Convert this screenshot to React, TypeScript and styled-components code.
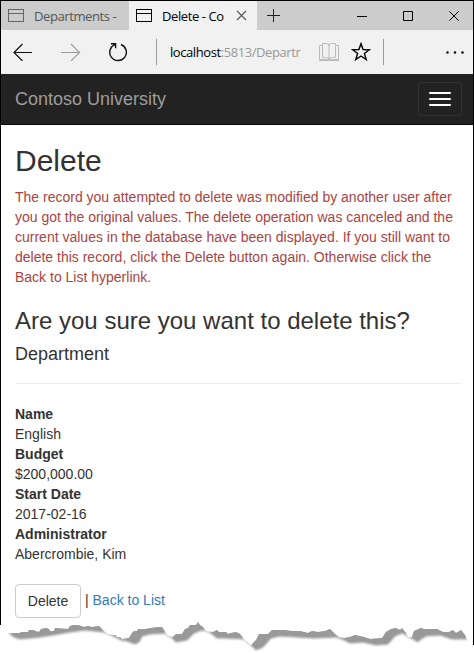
import React from "react";
import styled, { createGlobalStyle } from "styled-components";

const Global = createGlobalStyle`
  * { box-sizing: border-box; }
  body { margin: 0; background: #fff; }
`;

const Screen = styled.div`
  position: relative;
  width: 474px;
  height: 653px;
  overflow: hidden;
  background: #fff;
  color: #333;
  font: 14px/20px "Liberation Sans", Arial, sans-serif;
`;

const Window = styled.div`
  height: 645px;
  border-top: 1px solid #000;
  border-right: 1px solid #000;
  display: flex;
`;

const LeftEdge = styled.div`
  flex: none;
  width: 1px;
  height: 624px;
  background: #000;
`;

const Frame = styled.div`
  flex: 1;
  min-width: 0;
`;

const TabStrip = styled.div`
  display: flex;
  height: 29px;
  background: #ccc;
  font-family: "Open Sans", sans-serif;
`;

const Tab = styled.div<{ $active?: boolean }>`
  display: flex;
  align-items: center;
  width: 128px;
  padding-left: 7px;
  background: ${(p) => (p.$active ? "#f1f1f1" : "#ccc")};
  color: ${(p) => (p.$active ? "#000" : "#555")};
`;

const TabTitle = styled.span<{ $width: number }>`
  width: ${(p) => p.$width}px;
  margin-left: 9px;
  white-space: nowrap;
  font-size: 13px;
  line-height: 28px;
  letter-spacing: -0.4px;
`;

const WindowControls = styled.div`
  display: flex;
  flex: 1;
  align-items: center;
  justify-content: space-between;
  padding: 0 14px 0 8px;
`;

const ControlGroup = styled.div`
  display: flex;
  gap: 36px;
`;

const Toolbar = styled.div`
  display: flex;
  align-items: center;
  height: 44px;
  padding: 0 9px 0 12px;
  background: #f1f1f1;
`;

const NavIcons = styled.div`
  display: flex;
  align-items: center;
  gap: 28px;
`;

const Divider = styled.div<{ $before: number; $after: number }>`
  width: 1px;
  height: 26px;
  margin: 0 ${(p) => p.$after}px 0 ${(p) => p.$before}px;
  background: #999;
`;

const Address = styled.div`
  width: 134px;
  white-space: nowrap;
  font-family: "Open Sans", sans-serif;
  font-size: 13px;
  letter-spacing: -0.42px;
  color: #999;
  b { font-weight: 400; color: #000; }
`;

const PageActions = styled.div`
  display: flex;
  align-items: center;
  gap: 12px;
  margin-left: 15px;
`;

const More = styled.div`
  margin-left: auto;
  display: flex;
`;

const Navbar = styled.nav`
  display: flex;
  align-items: center;
  justify-content: space-between;
  height: 51px;
  padding: 0 11px 0 14px;
  background: #222;
  border-bottom: 1px solid #080808;
`;

const Brand = styled.span`
  color: #9d9d9d;
  font-size: 18px;
  line-height: 20px;
`;

const MenuButton = styled.button`
  display: flex;
  flex-direction: column;
  align-items: center;
  justify-content: center;
  gap: 4px;
  width: 44px;
  height: 34px;
  padding: 0;
  background: transparent;
  border: 1px solid #333;
  border-radius: 4px;
`;

const MenuBar = styled.span`
  width: 22px;
  height: 2px;
  border-radius: 1px;
  background: #fff;
`;

const Content = styled.main`
  padding: 19px 11px 0 14px;
`;

const Title = styled.h2`
  margin: 0 0 10px;
  font-size: 30px;
  font-weight: 400;
  line-height: 33px;
`;

const ErrorText = styled.p`
  margin: 0 0 20px;
  color: #a94442;
  white-space: nowrap;
`;

const Question = styled.h3`
  margin: 0 0 10px;
  font-size: 24px;
  font-weight: 400;
  line-height: 27px;
`;

const Entity = styled.h4`
  margin: 0;
  padding-bottom: 19px;
  border-bottom: 1px solid #eee;
  font-size: 18px;
  font-weight: 400;
  line-height: 20px;
`;

const Details = styled.dl`
  margin: 20px 0;
  dt { font-weight: 700; }
  dd { margin: 0; }
`;

const Actions = styled.div`
  display: flex;
  align-items: center;
  gap: 4px;
  height: 34px;
`;

const DeleteButton = styled.button`
  width: 66px;
  height: 34px;
  padding: 0;
  border: 1px solid #ccc;
  border-radius: 4px;
  background: #fff;
  color: #333;
  font: inherit;
`;

const Links = styled.span`
  line-height: 20px;
  margin-bottom: 2px;
  a { color: #337ab7; text-decoration: none; }
`;

const Torn = styled.svg`
  position: absolute;
  left: 0;
  top: 618px;
`;

const TabIcon = ({ color }: { color: string }) => (
  <svg width="17" height="14" viewBox="0 0 17 14" fill="none" stroke={color} shapeRendering="crispEdges">
    <path d="M.5.5h15v12H.5zM.5 4.5h15" />
  </svg>
);

const Cross = ({ color, size }: { color: string; size: number }) => (
  <svg width={size} height={size} viewBox="0 0 10 10" fill="none" stroke={color}>
    <path d="M.3.3l9.4 9.4M9.7.3L.3 9.7" />
  </svg>
);

const tornTop =
  "M9 633L20 633 21 632 28 632 29 630 34 630 35 631 39 632 41 629 46 628 49 629 50 631 54 631 55 628 68 629 70 626 73 625 78 625 84 627 88 626 92 627 99 626 104 631 108 634 114 635 116 635 117 637 120 637 122 639 129 638 132 633 134 631 137 631 138 629 145 629 151 628 158 627 162 627 164 630 167 635 173 637 176 634 182 634 185 629 188 628 190 625 196 625 198 622 200 625 203 627 206 631 213 632 217 630 219 632 226 632 228 634 231 633 236 632 240 634 244 639 251 645 256 640 259 634 268 634 272 630 284 630 292 631 300 631 308 633 312 631 318 632 325 631 330 629 335 634 339 637 344 638 350 637 355 635 364 637 370 639 382 638 386 632 391 629 396 628 400 630 402 628 406 633 408 637 412 637 414 631 421 628 424 629 437 629 443 632 449 632 453 630 456 633 461 630 465 635 467 639 ";

const tornShadow =
  tornTop +
  "452 639 440 635 426 636 421 639 418 642 413 639 408 636 402 633 395 636 388 644 376 645 363 642 350 643 342 639 336 637 314 638 280 636 271 638 263 647 256 650 251 645 244 639 225 638 217 638 208 631 202 630 194 633 187 640 176 642 172 638 166 633 150 634 142 636 139 642 135 644 127 641 121 640 111 635 104 632 85 630 70 632 53 635 40 637 20 639 14 637Z";

const details: [string, string][] = [
  ["Name", "English"],
  ["Budget", "$200,000.00"],
  ["Start Date", "2017-02-16"],
  ["Administrator", "Abercrombie, Kim"],
];

export default function App() {
  return (
    <Screen>
      <Global />
      <Window>
        <LeftEdge />
        <Frame>
          <TabStrip>
            <Tab>
              <TabIcon color="#666" />
              <TabTitle $width={90}>Departments -</TabTitle>
            </Tab>
            <Tab $active>
              <TabIcon color="#000" />
              <TabTitle $width={65}>Delete - Co</TabTitle>
              <svg width="20" height="12" viewBox="0 0 20 12" fill="none" stroke="#555" strokeWidth="1.1">
                <path d="M10 1l9 9M19 1l-9 9" />
              </svg>
            </Tab>
            <WindowControls>
              <svg width="15" height="15" viewBox="0 0 15 15" fill="none" stroke="#222">
                <path d="M2 7.5h13M8.5 1v13" />
              </svg>
              <ControlGroup>
                <svg width="10" height="10" viewBox="0 0 10 10" stroke="#000">
                  <path d="M0 5.5h10" />
                </svg>
                <svg width="10" height="10" viewBox="0 0 10 10" fill="none" stroke="#000">
                  <path d="M.5.5h9v9h-9z" />
                </svg>
                <Cross color="#000" size={10} />
              </ControlGroup>
            </WindowControls>
          </TabStrip>
          <Toolbar>
            <NavIcons>
              <svg width="20" height="18" viewBox="0 0 20 18" fill="none" stroke="#111" strokeWidth="1.2">
                <path d="M19 9.5H1M9.5 1L1 9.5 9.5 18" />
              </svg>
              <svg width="20" height="18" viewBox="0 0 20 18" fill="none" stroke="#999" strokeWidth="1.1">
                <path d="M0 9.5h18M10 1l8.5 8.5L10 18" />
              </svg>
              <svg width="20" height="20" viewBox="0 0 20 20" fill="none" stroke="#111" strokeWidth="1.4">
                <path d="M12 2.5a8.3 8.3 0 1 1-5.6-.1M2 1.7h4.6v4.6" />
              </svg>
            </NavIcons>
            <Divider $before={27} $after={13} />
            <Address>
              <b>localhost</b>:5813/Departr
            </Address>
            <PageActions>
              <svg width="20" height="20" viewBox="0 0 20 20" fill="none" stroke="#bbb">
                <path d="M3.5 1.5h4q2.5 0 2.5 2.3 0-2.3 2.5-2.3h4v14h-4q-2.5 0-2.5 1.5 0-1.5-2.5-1.5h-4zM10 3v14M3.5 3.5h-3v15h19v-15h-3M1 17.5h18" />
              </svg>
              <svg width="20" height="20" viewBox="0 0 20 20" fill="none" stroke="#000" strokeWidth="1.4">
                <path d="M10 1.7l2.1 5.8 6.2.2-4.9 3.8 1.8 6-5.2-3.5-5.2 3.5 1.8-6-4.9-3.8 6.2-.2z" />
              </svg>
            </PageActions>
            <Divider $before={12} $after={0} />
            <More>
              <svg width="18" height="3" viewBox="0 0 18 3">
                <circle cx="1.5" cy="1.5" r="1.2" />
                <circle cx="9" cy="1.5" r="1.2" />
                <circle cx="16.5" cy="1.5" r="1.2" />
              </svg>
            </More>
          </Toolbar>
          <Navbar>
            <Brand>Contoso University</Brand>
            <MenuButton aria-label="Toggle navigation">
              <MenuBar />
              <MenuBar />
              <MenuBar />
            </MenuButton>
          </Navbar>
          <Content>
            <Title>Delete</Title>
            <ErrorText>
              The record you attempted to delete was modified by another user after
              <br />
              you got the original values. The delete operation was canceled and the
              <br />
              current values in the database have been displayed. If you still want to
              <br />
              delete this record, click the Delete button again. Otherwise click the
              <br />
              Back to List hyperlink.
            </ErrorText>
            <Question>Are you sure you want to delete this?</Question>
            <Entity>Department</Entity>
            <Details>
              {details.map(([term, value]) => (
                <React.Fragment key={term}>
                  <dt>{term}</dt>
                  <dd>{value}</dd>
                </React.Fragment>
              ))}
            </Details>
            <Actions>
              <DeleteButton>Delete</DeleteButton>
              <Links>
                | <a href="#list">Back to List</a>
              </Links>
            </Actions>
          </Content>
        </Frame>
      </Window>
      <Torn width="472" height="35" viewBox="0 618 472 35">
        <defs>
          <filter id="soft" x="-5%" y="-20%" width="110%" height="140%">
            <feGaussianBlur stdDeviation="1.1" />
          </filter>
          <clipPath id="below">
            <path d={tornTop + "471 640 471 653 0 653 0 633Z"} />
          </clipPath>
        </defs>
        <g clipPath="url(#below)">
          <path d={tornShadow} fill="#999" stroke="#999" strokeWidth="1" filter="url(#soft)" />
          <path d={tornShadow} fill="#999" transform="translate(0 -1.5)" />
        </g>
      </Torn>
    </Screen>
  );
}
